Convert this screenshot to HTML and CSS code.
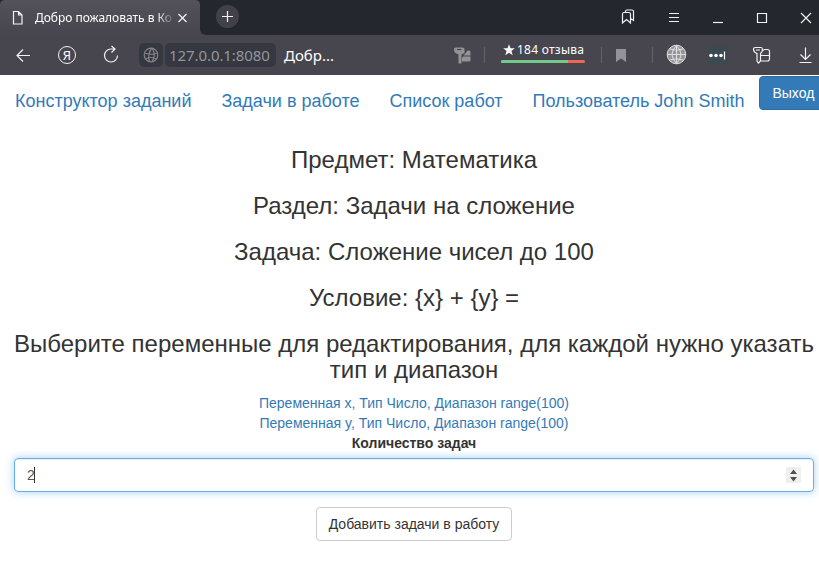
FILE: index.html
```html
<!DOCTYPE html>
<html lang="ru">
<head>
<meta charset="utf-8">
<title>Добро пожаловать в Ко</title>
<link rel="stylesheet" href="styles.css">
</head>
<body>
<div class="browser">
  <div class="tabbar">
    <div class="tab">
      <svg class="doc" width="12" height="16" viewBox="0 0 12 16"><path d="M1.500 1.500h5l3.500 3.500v9h-8.500zM6.500 1.500v3.500h3.500"/></svg>
      <span class="tab-title">Добро пожаловать в Ко</span>
      <svg width="9" height="10" viewBox="0 0 9 10"><path d="M.5 1l8 8M8.500 1l-8 8"/></svg>
    </div>
    <div class="strip">
      <span class="plus"><svg width="11" height="11" viewBox="0 0 11 11"><path d="M5.500 0v11M0 5.500h11"/></svg></span>
      <div class="window">
        <svg width="14" height="16" viewBox="0 0 14 16"><path d="M1.500 5q0-1.500 1.500-1.500h5q1.500 0 1.500 1.500v9l-4-3.500-4 3.500zM4.500 3.500V2.500q0-1.500 1.500-1.500h5q1.500 0 1.500 1.500v9l-3-2"/></svg>
        <svg width="10" height="16" viewBox="0 0 10 16"><path d="M0 4.500h10M0 8.500h10M0 12.500h10"/></svg>
        <svg width="10" height="16" viewBox="0 0 10 16"><path d="M0 13.500h10"/></svg>
        <svg width="10" height="16" viewBox="0 0 10 16"><path d="M.5 4.500h9v9h-9z"/></svg>
        <svg width="10" height="16" viewBox="0 0 10 16"><path d="M0 4l10 10M10 4L0 14"/></svg>
      </div>
    </div>
  </div>
  <div class="toolbar">
    <svg class="back" width="14" height="14" viewBox="0 0 14 14"><path d="M14 7.500H1M7 1.500l-6 6 6 6"/></svg>
    <span class="ya">Я</span>
    <svg class="reload" width="16" height="18" viewBox="0 0 16 18"><path d="M14.500 9.500a6.500 6.500 0 1 1-6.500-6.500h3.500M8.500 0l3.500 3-3.500 3.500"/></svg>
    <span class="site"><svg width="16" height="16" viewBox="0 0 16 16"><circle cx="8" cy="8" r="6.800"/><path d="M1.500 6q6.500 2.500 13 0M2.500 12q5.500-3 11 0M9 1Q4 7 6.500 15M9 1q4.500 6.500 0 14"/></svg></span>
    <span class="url">127.0.0.1:8080</span>
    <span class="page-name">Добр...</span>
    <svg class="keys" width="17" height="17" viewBox="0 0 17 17"><path d="M0 2q0-1.500 2-1.500h6.500q2 0 2 1.500v4L7.500 7.500v9h-3v-9L1.500 6Q0 5 0 3zM12 5.500l1.500-2H15q1.500 0 1.500 1.500v3.500H9.500zM9 9.500h7.500V13q0 1.500-1.500 1.500H8v-3z"/><path class="slot" d="M3 2.500h4.500"/></svg>
    <i class="sep"></i>
    <div class="reviews"><span><svg width="12" height="12" viewBox="0 0 12 12"><path d="M6 .2l1.500 4h4.300L8.400 6.900l1.300 4.400L6 8.700l-3.700 2.600 1.300-4.400L.2 4.200h4.300z"/></svg>184 отзыва</span><div class="rating"><b></b></div></div>
    <i class="sep"></i>
    <svg class="bookmark" width="10" height="13" viewBox="0 0 10 13"><path d="M0 0h10v13L5 9.500 0 13z"/></svg>
    <i class="sep"></i>
    <svg class="globe" width="20" height="20" viewBox="0 0 20 20"><circle cx="9.500" cy="9.500" r="9.300"/><path d="M9.500.5v18M.5 9.500h18M3 4q6.500 2.500 13 0M3 15q6.500-2.500 13 0M9.500.5q-9 9 0 18M9.500.5q9 9 0 18"/></svg>
    <svg class="dots" width="20" height="19" viewBox="0 0 20 19"><rect width="20" height="19" rx="3"/><circle cx="3" cy="9.500" r="1.800"/><circle cx="8" cy="9.500" r="1.800"/><circle cx="13" cy="9.500" r="1.800"/><path d="M16.500 5.500v8"/></svg>
    <svg class="key" width="19" height="18" viewBox="0 0 19 18"><path d="M2.500 1.500h5.500q1.500 0 1.500 2 0 2.500-2 4v7.500l-2 2-1.500-2V7.500Q.5 6 .5 3.500q0-2 2-2zM3 4h4M10 4.500q1-1 2-1h2.500q2 0 2 2v7q0 2.500-2 2.500H8M8 9.500h8.500"/></svg>
    <svg class="down" width="14" height="16" viewBox="0 0 14 16"><path d="M7.500.5v11.500M2.500 7.500l5 5 5-5M1.500 15.500h12"/></svg>
  </div>
</div>
<nav class="nav">
  <a>Конструктор заданий</a>
  <a>Задачи в работе</a>
  <a>Список работ</a>
  <a>Пользователь John Smith</a>
  <button class="logout">Выход</button>
</nav>
<main class="content">
  <h3>Предмет: Математика</h3>
  <h3>Раздел: Задачи на сложение</h3>
  <h3>Задача: Сложение чисел до 100</h3>
  <h3>Условие: {x} + {y} =</h3>
  <h3 class="last">Выберите переменные для редактирования, для каждой нужно указать тип и диапазон</h3>
  <a class="variable">Переменная x, Тип Число, Диапазон range(100)</a>
  <a class="variable">Переменная y, Тип Число, Диапазон range(100)</a>
  <div class="label">Количество задач</div>
  <div class="field"><span class="value">2</span><svg class="spinner" width="15" height="16" viewBox="0 0 15 16"><path d="M4 7L7.500 2.500 11 7zM4 10h7l-3.500 4.500z"/></svg></div>
  <button class="add">Добавить задачи в работу</button>
</main>
</body>
</html>
```
FILE: styles.css
```css
* { box-sizing: border-box; }
body { margin: 0; width: 819px; height: 565px; overflow: hidden; background: #fff; color: #333; font: 14px/20px "Liberation Sans", Arial, sans-serif; }
svg { display: block; flex: none; fill: none; stroke: #f2f2f3; stroke-width: 1.2; overflow: visible; }
.browser { height: 75px; background: #47464f; color: #fff; font-family: "Noto Sans", sans-serif; }
.tabbar { display: flex; height: 35px; background: #47464f; }
.tab { display: flex; align-items: center; width: 200px; padding-left: 12px; background: linear-gradient(#53525a, #47464f); border-radius: 5px 5px 0 0; box-shadow: 0 -5px 0 #25272f; }
.tab-title { width: 140px; margin: 0 3px 0 11px; white-space: nowrap; font-size: 12px; letter-spacing: -0.02px; -webkit-mask-image: linear-gradient(90deg, #000 122px, transparent 140px); mask-image: linear-gradient(90deg, #000 122px, transparent 140px); }
.strip { flex: 1; display: flex; align-items: center; background: #25272f; border-bottom-left-radius: 6px; }
.plus { display: grid; place-items: center; width: 23px; height: 23px; margin: -2px 0 0 16px; border-radius: 50%; background: #42414a; }
.window { display: flex; margin-left: auto; gap: 34px; padding-right: 9px; margin-top: -2px; flex: none; }
.window svg:last-child { margin-right: -1px; }
.toolbar { display: grid; height: 40px; align-items: center; grid-template-columns: 16px 42px 45px 36px 26px 119px 170px 30px 17px 100px 15px 36px 15px 41px 45px 45px 21px; }
.back { grid-column: 2; }
.ya { display: grid; place-items: center; width: 18px; height: 18px; border: 1px solid #f2f2f3; border-radius: 50%; font-size: 13px; line-height: 15px; }
.site { display: grid; place-items: center; width: 24px; height: 24px; border-radius: 5px; background: #363841; }
.site svg { stroke: #83848a; }
.url { width: 111px; height: 24px; padding-left: 4px; border-radius: 5px; background: #363841; color: #94959b; font-size: 15px; line-height: 24px; letter-spacing: -0.08px; white-space: nowrap; }
.page-name { font-size: 15px; }
.keys { fill: #929297; stroke: none; }
.keys .slot { stroke: #47464f; }
.sep { width: 1px; height: 16px; background: #64636b; }
.reviews { width: 84px; height: 22px; margin-top: -2px; }
.reviews span { display: flex; align-items: center; gap: 2px; height: 14px; padding-left: 2px; font-size: 12px; line-height: 14px; letter-spacing: 0.25px; white-space: nowrap; }
.reviews svg { fill: #fff; stroke: none; }
.rating { height: 3px; margin-top: 3px; border-radius: 2px; background: #ef6659; overflow: hidden; }
.rating b { display: block; width: 67px; height: 3px; background: #72c78b; }
.bookmark { fill: #929297; stroke: none; }
.globe { fill: #96969a; stroke: #dededf; stroke-width: 1; }
.dots { fill: #fff; stroke: none; }
.dots rect { fill: #3b4951; }
.dots path { stroke: #fff; }
.nav { display: flex; height: 52px; align-items: flex-start; padding: 16px 0 0 15px; color: #337ab7; font-size: 18px; white-space: nowrap; }
.nav a { margin-right: 30px; }
.nav a:nth-of-type(4) { margin-right: 15px; }
button { height: 34px; padding: 0 12px; border-radius: 4px; font: 14px/20px "Liberation Sans", Arial, sans-serif; white-space: nowrap; }
.logout { flex: none; margin-top: -15px; border: 1px solid #2e6da4; background: #337ab7; color: #fff; }
.content { width: 800px; margin: 20px 0 0 14px; text-align: center; }
h3 { margin: 0 0 20px; font-size: 24px; line-height: 26px; font-weight: 400; }
.last { margin-bottom: 10px; }
.variable { display: block; color: #337ab7; }
.label { margin-bottom: 5px; font-weight: 700; }
.field { display: flex; align-items: center; justify-content: space-between; height: 34px; padding: 0 12px; border: 1px solid #66afe9; border-radius: 4px; color: #555; box-shadow: inset 0 1px 1px rgba(0,0,0,.075), 0 0 8px rgba(102,175,233,.6); }
.value { width: 8px; height: 16px; line-height: 17px; border-right: 1px solid #333; }
.spinner { background: #efefef; fill: #505050; stroke: none; }
.add { margin-top: 15px; border: 1px solid #ccc; background: #fff; color: #333; }
```
